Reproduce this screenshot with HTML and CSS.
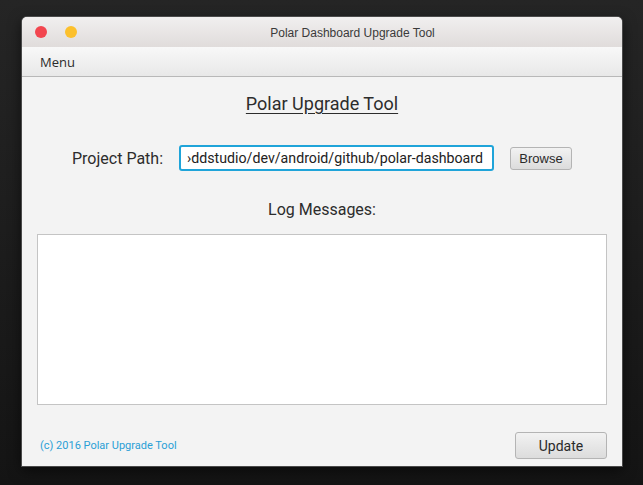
FILE: index.html
```html
<!DOCTYPE html>
<html>
<head>
<meta charset="utf-8">
<link rel="stylesheet" href="styles.css">
</head>
<body>
<div class="window">
  <div class="titlebar">
    <div class="lights">
      <span class="dot red"></span>
      <span class="dot yellow"></span>
    </div>
    <div class="title">Polar Dashboard Upgrade Tool</div>
  </div>
  <div class="menubar"><span class="menu">Menu</span></div>
  <div class="content">
    <h1 class="heading">Polar Upgrade Tool</h1>
    <div class="path-row">
      <label class="path-label">Project Path:</label>
      <div class="path-input">›ddstudio/dev/android/github/polar-dashboard</div>
      <button class="btn browse">Browse</button>
    </div>
    <div class="log-label">Log Messages:</div>
    <div class="log-box"></div>
    <div class="footer">
      <span class="copy">(c) 2016 Polar Upgrade Tool</span>
      <button class="btn update">Update</button>
    </div>
  </div>
</div>
</body>
</html>
```
FILE: styles.css
```css
html, body {
  margin: 0;
  padding: 0;
  width: 643px;
  height: 485px;
  overflow: hidden;
}
body {
  background: linear-gradient(#252525, #141414);
  font-family: Roboto, "Liberation Sans", sans-serif;
}
.window {
  margin: 17px 0 0 22px;
  width: 600px;
  height: 449px;
  background: #f3f3f3;
  border-radius: 5px 5px 0 0;
  box-shadow: 0 0 0 1px #4a4a4a, 0 4px 14px rgba(0,0,0,0.6);
  display: flex;
  flex-direction: column;
  overflow: hidden;
}
.titlebar {
  height: 30px;
  flex: none;
  background: linear-gradient(#f1efef, #e0dcdb);
  display: flex;
  align-items: center;
}
.lights {
  display: flex;
  gap: 18px;
  padding-left: 13px;
}
.dot {
  width: 12px;
  height: 12px;
  border-radius: 50%;
  display: block;
}
.red { background: #f2464f; }
.yellow { background: #fcc02c; }
.title {
  flex: 1;
  text-align: center;
  font-family: "Liberation Sans", Arial, sans-serif;
  font-size: 12px;
  color: #3a3a3a;
  margin-left: 6px;
  padding-top: 2px;
}
.menubar {
  height: 29px;
  flex: none;
  background: linear-gradient(#f8f8f8, #e8e8e8);
  border-bottom: 1px solid #b8b8b8;
  display: flex;
  align-items: center;
  padding-left: 18px;
}
.menu {
  font-family: "Open Sans", "Liberation Sans", sans-serif;
  font-size: 13px;
  color: #2b2b2b;
}
.content {
  flex: 1;
  display: flex;
  flex-direction: column;
  padding: 0 15px;
}
.heading {
  margin: 16px 0 0;
  text-align: center;
  font-size: 18px;
  font-weight: 400;
  color: #2c2c2c;
  text-decoration: underline;
  text-underline-offset: 3px;
  line-height: 22px;
}
.path-row {
  display: flex;
  align-items: center;
  margin-top: 30px;
  padding-left: 35px;
}
.path-label {
  font-size: 16px;
  color: #2c2c2c;
  width: 107px;
}
.path-input {
  width: 305px;
  height: 22px;
  border: 2px solid #1fa4d9;
  border-radius: 3px;
  background: #fff;
  font-size: 14.2px;
  color: #222;
  line-height: 22px;
  padding-left: 6px;
  box-sizing: content-box;
  white-space: nowrap;
  overflow: hidden;
}
.btn {
  font-family: "Liberation Sans", Arial, sans-serif;
  background: linear-gradient(#f2f2f2, #dcdcdc);
  border: 1px solid #b4b4b4;
  border-radius: 3px;
  color: #2a2a2a;
  padding: 0;
}
.browse {
  margin-left: 16px;
  width: 62px;
  height: 23px;
  font-size: 13px;
}
.log-label {
  text-align: center;
  margin-top: 30px;
  font-size: 16px;
  color: #2c2c2c;
  line-height: 18px;
}
.log-box {
  margin-top: 15px;
  height: 169px;
  background: #fff;
  border: 1px solid #c4c4c4;
}
.footer {
  display: flex;
  justify-content: space-between;
  align-items: center;
  margin-top: 27px;
  padding-left: 3px;
}
.copy {
  font-size: 11px;
  color: #2a9fd6;
}
.update {
  width: 92px;
  height: 27px;
  font-size: 14px;
  font-family: Roboto, sans-serif;
}
```
